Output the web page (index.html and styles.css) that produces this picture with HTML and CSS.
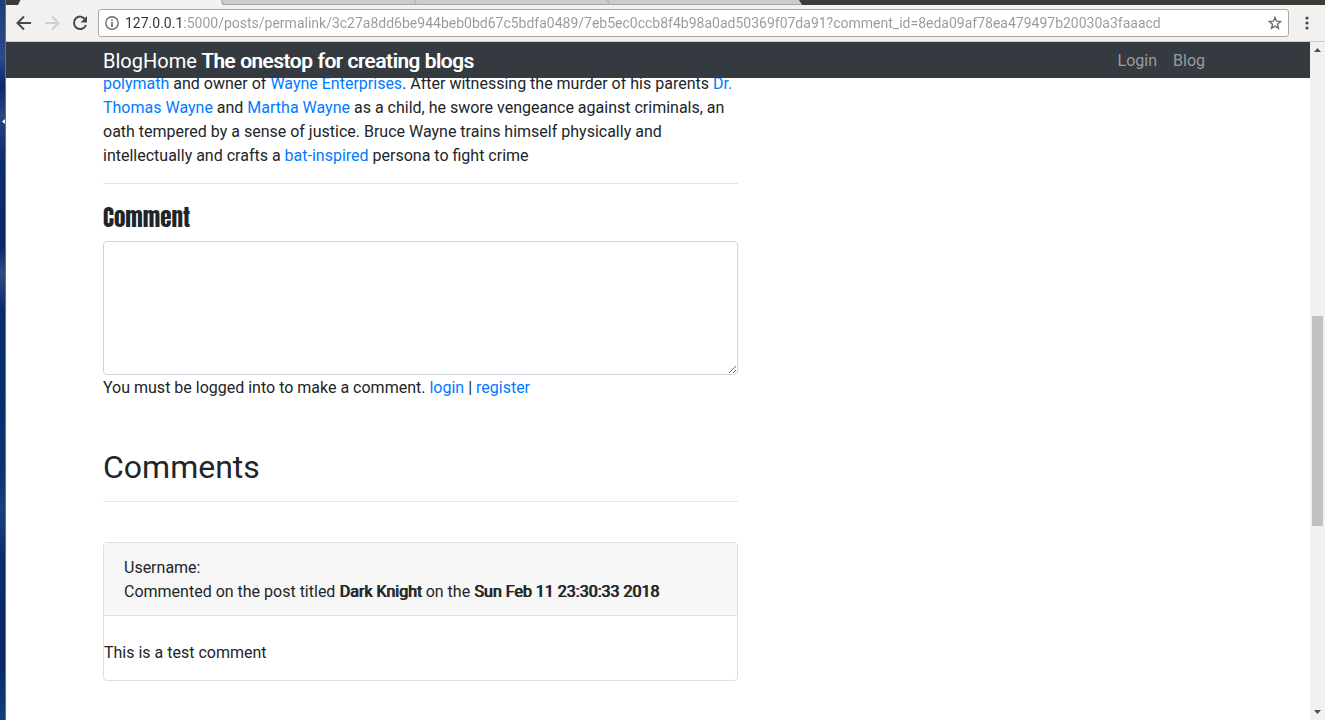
FILE: index.html
```html
<!DOCTYPE html>
<html lang="en">
<head>
<meta charset="utf-8">
<title>BlogHome</title>
<link rel="stylesheet" href="styles.css">
</head>
<body>
<div class="desktop">
  <div class="wallpaper">
    <svg class="wallpaper-arrow" width="4" height="5" viewBox="0 0 4 5" aria-hidden="true"><path d="M0 2.5 3 0v5z" fill="#fff"/></svg>
  </div>
  <div class="window">
    <div class="tabstrip">
      <svg width="804" height="5" viewBox="0 0 804 5" aria-hidden="true">
        <path d="M215 0H793L796 5H218z" fill="#cdcccb"/>
        <path d="M215.500 0 217.500 4.500H795" fill="none" stroke="#a9a8a5"/>
        <path d="M408.500 0 410.500 4.500M601.500 0 603.500 4.500" stroke="#a9a8a5"/>
        <path d="M14.500 0H215L217 5H12z" fill="#f2f1f0"/>
      </svg>
    </div>
    <div class="toolbar">
      <button class="tool" aria-label="Back"><svg width="16" height="16" viewBox="0 0 16 16"><path d="M15 8H2M8 1.500 1.500 8 8 14.500" fill="none" stroke="#484848" stroke-width="2"/></svg></button>
      <button class="tool" aria-label="Forward"><svg width="16" height="16" viewBox="0 0 16 16"><path d="M1 8H14M8 1.500 14.500 8 8 14.500" fill="none" stroke="#cfcfcd" stroke-width="2"/></svg></button>
      <button class="tool" aria-label="Reload"><svg width="16" height="16" viewBox="0 0 16 16"><path d="M13.300 4.300A6.200 6.200 0 1 0 14 10" fill="none" stroke="#484848" stroke-width="2"/><path d="M15 1v6.500H8.500z" fill="#484848"/></svg></button>
      <div class="omnibox">
        <svg width="14" height="14" viewBox="0 0 14 14" aria-hidden="true"><circle cx="7" cy="7" r="6.200" fill="none" stroke="#6b6b6b" stroke-width="1.400"/><path d="M6.200 3.200h1.600v1.600H6.200zM6.200 6h1.600v5H6.200z" fill="#6b6b6b"/></svg>
        <input class="address" type="text" aria-label="Address" value="127.0.0.1:5000/posts/permalink/3c27a8dd6be944beb0bd67c5bdfa0489/7eb5ec0ccb8f4b98a0ad50369f07da91?comment_id=8eda09af78ea479497b20030a3faaacd">
        <button class="star" aria-label="Bookmark"><svg width="14" height="14" viewBox="0 0 14 14"><path d="M7 1.500 8.600 5.200 12.700 5.500 9.500 8.200 10.500 12.300 7 10.100 3.500 12.300 4.500 8.200 1.300 5.500 5.400 5.200z" fill="none" stroke="#6b6b6b" stroke-width="1.400"/></svg></button>
      </div>
      <button class="menu" aria-label="Menu"><svg width="4" height="14" viewBox="0 0 4 14"><g fill="#484848"><circle cx="2" cy="2" r="1.600"/><circle cx="2" cy="7" r="1.600"/><circle cx="2" cy="12" r="1.600"/></g></svg></button>
    </div>
    <div class="viewport">
      <div class="page">
        <nav class="navbar">
          <div class="container navbar-row">
            <a class="brand" href="#">BlogHome <strong class="thick">The onestop for creating blogs</strong></a>
            <div class="links">
              <a class="nav-link" href="#">Login</a>
              <a class="nav-link" href="#">Blog</a>
            </div>
          </div>
        </nav>
        <main class="container">
          <div class="column">
            <p class="post"><a href="#">polymath</a> and owner of <a href="#">Wayne Enterprises</a>. After witnessing the murder of his parents <a href="#">Dr. Thomas Wayne</a> and <a href="#">Martha Wayne</a> as a child, he swore vengeance against criminals, an oath tempered by a sense of justice. Bruce Wayne trains himself physically and intellectually and crafts a <a href="#">bat-inspired</a> persona to fight crime</p>
            <hr>
            <label class="form-title" for="comment">Comment</label>
            <textarea class="comment-box" id="comment"></textarea>
            <div class="note">You must be logged into to make a comment. <a href="#">login</a> | <a href="#">register</a></div>
            <h2 class="comments-title">Comments</h2>
            <hr>
            <article class="card">
              <header class="card-header">Username:<br>Commented on the post titled <strong class="thick">Dark Knight</strong> on the <strong class="thick">Sun Feb 11 23:30:33 2018</strong></header>
              <p class="card-text">This is a test comment</p>
            </article>
          </div>
        </main>
      </div>
      <div class="scrollbar" aria-hidden="true">
        <svg width="7" height="4" viewBox="0 0 7 4"><path d="M0 4 3.500 0 7 4z" fill="#505050"/></svg>
        <div class="track"><div class="thumb"></div></div>
        <svg width="7" height="4" viewBox="0 0 7 4"><path d="M0 0 3.500 4 7 0z" fill="#505050"/></svg>
      </div>
    </div>
  </div>
</div>
</body>
</html>
```
FILE: styles.css
```css
* { box-sizing: border-box; }
body {
  margin: 0;
  font: 16px/24px Roboto, "Liberation Sans", sans-serif;
  color: #212529;
  background: #fff;
}
a { color: #007bff; text-decoration: none; }
button { border: 0; padding: 0; background: none; display: flex; }
hr { margin: 15px 0 16px; border: 0; border-top: 1px solid #e5e5e5; }

.desktop { display: flex; height: 100vh; overflow: hidden; }
.wallpaper {
  position: relative;
  flex: 0 0 6px;
  border-right: 1px solid #4a75a4;
  background: linear-gradient(#1f3d7c 0, #2c4a86 8%, #0b2a6b 12%, #2a457f 16%, #0d2c6c 22%, #0a2868 34%, #304a80 38%, #0a2c6d 43%, #0b2f70 65%, #1c3f7c 71%, #0a2b6b 78%, #0a2766 92%, #0f3f7c 100%);
}
.wallpaper-arrow { position: absolute; left: 2px; top: 119px; }
.window { flex: 1; min-width: 0; display: flex; flex-direction: column; }
.tabstrip { height: 5px; overflow: hidden; background: #3c3b37; }
.tabstrip svg { display: block; }
.toolbar {
  display: flex;
  align-items: center;
  gap: 12px;
  height: 37px;
  padding: 0 16px 0 10px;
  background: #f2f1f0;
  border-bottom: 1px solid #cdcccb;
}
.omnibox {
  flex: 1;
  display: flex;
  align-items: center;
  gap: 6px;
  height: 28px;
  margin: 0 4px 0 -2px;
  padding: 0 6px;
  border: 1px solid #aaa9a7;
  border-radius: 3px;
  background: #fff;
}
.address {
  flex: 1;
  min-width: 0;
  padding: 0;
  border: 0;
  font: 14px/20px Roboto, "Noto Sans", sans-serif;
  color: transparent;
  background: linear-gradient(to right, #333 56px, #999 56px);
  -webkit-background-clip: text;
  background-clip: text;
}
.tool { width: 16px; }

.viewport { flex: 1; min-height: 0; display: flex; }
.page { flex: 1; min-width: 0; overflow: hidden; }
.container { width: 100%; max-width: 1140px; margin: 0 auto; padding: 0 15px; }
.navbar { position: sticky; top: 0; z-index: 1; background: #343a40; }
.navbar-row { display: flex; justify-content: space-between; align-items: center; height: 36px; padding-top: 2px; }
.brand { color: #fff; font-size: 20px; }
.thick { font-weight: 400; text-shadow: 1px 0 0 currentColor; }
.links { display: flex; }
.nav-link { padding: 0 8px; color: #999c9f; }

.column { width: calc((100% + 30px) * 7 / 12 - 30px); }
.post { margin: -6px 0 0; }
.form-title {
  display: block;
  margin-bottom: 6px;
  font: 23px/35px Anton, Impact, "Liberation Sans Narrow", "DejaVu Sans Condensed", sans-serif;
}
.comment-box {
  display: block;
  width: 100%;
  height: 134px;
  padding: 6px 12px;
  border: 1px solid #ced4da;
  border-radius: 4px;
  font: inherit;
  resize: vertical;
}
.note { padding-top: 1px; }
.comments-title { margin: 48px 0 0; font-size: 32px; line-height: 38px; font-weight: 400; }
.card { margin-top: 40px; border: 1px solid #dfdfdf; border-radius: 4px; }
.card-header { padding: 13px 20px 11px; background: #f7f7f7; border-bottom: 1px solid #dfdfdf; }
.card-text { margin: 25px 0 15px; }

.scrollbar {
  flex: 0 0 15px;
  display: flex;
  flex-direction: column;
  align-items: center;
  gap: 6px;
  padding: 6px 0;
  background: #f1f1f1;
}
.track { flex: 1; width: 11px; display: flex; flex-direction: column; }
.track::before { content: ""; flex: 258; }
.track::after { content: ""; flex: 178; }
.thumb { flex: 210; background: #c1c1c1; }
```
